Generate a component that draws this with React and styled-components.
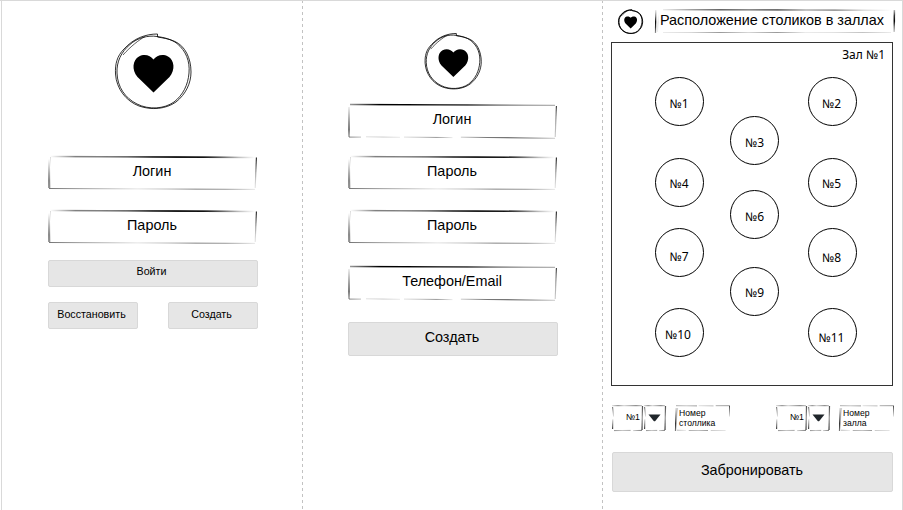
import React, { useId } from "react";
import styled, { createGlobalStyle } from "styled-components";

const GlobalStyle = createGlobalStyle`
  * { box-sizing: border-box; }
  body {
    margin: 0;
    background: #fff;
    color: #000;
    font-family: "Liberation Sans", Arial, sans-serif;
  }
`;

const Board = styled.main`
  display: grid;
  grid-template-columns: 301px 300px 1fr;
  width: 903px;
  height: 510px;
  padding-left: 1px;
  border-top: 1px solid #d9d9d9;
  border-right: 1px solid #d9d9d9;
  overflow: hidden;
`;

const Screen = styled.section`
  display: flex;
  flex-direction: column;
  align-items: ${(p) => p.$align || "center"};
  padding: ${(p) => p.$pad};
  border-left: 1px solid ${(p) => (p.$first ? "#d9d9d9" : "transparent")};
  ${(p) =>
    !p.$first &&
    `border-image: repeating-linear-gradient(to bottom, #c2c2c2 0 3px, transparent 3px 6px) 1;
     border-width: 0 0 0 1px;`}
`;

const Form = styled.form`
  display: flex;
  flex-direction: column;
  width: 210px;
  margin-top: ${(p) => p.$top}px;
`;

const FieldBox = styled.div`
  position: relative;
  display: flex;
  flex: none;
  align-items: ${(p) => (p.$multi ? "flex-start" : "center")};
  justify-content: ${(p) => p.$justify || "center"};
  width: ${(p) => p.$w}px;
  height: ${(p) => p.$h}px;
  margin-top: ${(p) => p.$mt || 0}px;
  padding: ${(p) => p.$pad || "0 0 5px 0"};
  font-size: ${(p) => p.$size || 14.4}px;
  line-height: ${(p) => (p.$multi ? "10px" : "18px")};
  white-space: nowrap;
`;

const FrameSvg = styled.svg`
  position: absolute;
  inset: 0;
  overflow: visible;
  pointer-events: none;
`;

const Button = styled.button`
  display: flex;
  align-items: center;
  justify-content: center;
  width: ${(p) => p.$w}px;
  height: ${(p) => p.$h}px;
  margin: ${(p) => p.$mt || 0}px 0 0;
  padding: ${(p) => p.$pad || "0 2px 3px 0"};
  border: 1px solid #d8d8d8;
  border-radius: 2px;
  background: #e6e6e6;
  color: #000;
  font-family: inherit;
  font-size: ${(p) => p.$size || 14.4}px;
  line-height: 18px;
`;

const ButtonRow = styled.div`
  display: flex;
  justify-content: space-between;
  margin-top: 15px;
`;

const LogoSvg = styled.svg`
  display: block;
  flex: none;
  width: ${(p) => p.$size}px;
  height: ${(p) => p.$size}px;
  overflow: visible;
`;

const Header = styled.header`
  display: flex;
  align-items: flex-start;
  gap: 12px;
  height: 33px;
  padding-left: 6px;
`;

const Hall = styled.div`
  position: relative;
  width: 282px;
  height: 344px;
  margin-left: -1px;
  border: 1px solid #333;
  font-family: "Noto Sans", sans-serif;
  font-size: 12px;
  line-height: 16px;
`;

const HallName = styled.div`
  padding: 4px 7px 0 0;
  text-align: right;
`;

const Table = styled.div`
  position: absolute;
  left: ${(p) => p.$x - 24.5}px;
  top: ${(p) => p.$y - 24.5}px;
  display: flex;
  align-items: center;
  justify-content: center;
  width: 49px;
  height: 49px;
  padding-top: ${(p) => p.$dy * 2}px;
  padding-right: ${(p) => p.$dx || 0}px;
  border: 1px solid #000;
  border-radius: 50%;
`;

const Pickers = styled.div`
  display: flex;
  justify-content: space-between;
  width: 282px;
  margin-top: 19px;
`;

const Picker = styled.div`
  display: flex;
`;

const PickerParts = styled.div`
  display: flex;
  gap: 1px;
  margin-right: 9px;
`;

const Arrow = styled.svg`
  display: block;
  flex: none;
  width: 13px;
  height: 8px;
`;

/* Each stroke: endpoints from the box size, a width, and opacity stops along its length. */
const frames = {
  soft: (w, h) => [
    [2, 0.5, w - 2, 1.5, 1.3, [0, 0.5, 0.5, 0.6, 0.9, 1, 0.9, 0.4, 0]],
    [w * 0.3, 0.5, w - 18, 1, 1, [0, 0.2, 0.6, 0.5, 0]],
    [1, 3, 1, h - 2, 1.3, [0, 0.25, 0.5, 0.7, 0.6]],
    [2.5, 1, 2.2, h - 2, 0.7, [0.2, 0, 0.1, 0.3]],
    [1, h - 1.5, w - 2, h - 0.6, 0.9, [0.6, 0.45, 0.3, 0.12, 0.3, 0.55, 0.45, 0.1]],
    [w - 0.6, 1.5, w - 1.8, h - 2, 1.1, [0.9, 0.7, 0.4, 0.2, 0.1]],
  ],
  bold: (w, h) => [
    [2, 0.5, w - 2, 1.4, 1.3, [0.4, 1, 1, 0.9, 0.9, 0.6, 0.4, 0.3]],
    [1, 3, 1, h - 1, 1.3, [0.1, 0.35, 0.6, 0.8, 0.4]],
    [1, h - 0.9, 13, h - 0.9, 1, [0.5, 0.25]],
    [18, h - 1.2, 52, h - 0.7, 0.8, [0.15, 0.25, 0.1]],
    [56, h - 0.9, w * 0.5, h - 0.4, 0.8, [0.15, 0.3, 0.5, 0.1]],
    [w * 0.54, h - 0.8, w - 2, h + 0.3, 1, [0.2, 0.5, 0.7, 0.5, 0.2]],
    [w - 0.6, 2, w - 1.8, h - 1, 1.1, [0.8, 0.5, 0.3, 0.2]],
  ],
  title: (w, h) => [
    [8, 0.7, w - 3, 1.2, 1.1, [0.1, 0.5, 0.8, 0.6, 0.8, 0.4, 0.6, 0.2, 0]],
    [0.8, 1, 0.5, h, 1.2, [0.1, 0.5, 1, 0.8, 0.4]],
    [3.5, 5, 2.5, h - 1, 0.7, [0, 0.2, 0.1]],
    [8, h - 0.5, w - 4, h - 0.5, 0.8, [0.1, 0.2, 0.5, 0.2, 0.5, 0.1, 0.15, 0.3, 0.1]],
    [w - 0.6, 1, w - 0.8, h - 1, 1.5, [0.3, 0.8, 1, 0.5, 0.2]],
  ],
  picker: (w, h) => [
    [0, 0.7, w - 1, 0.7, 0.9, [0.15, 0.55, 0.2, 0.4, 0.6, 0.3]],
    [0.6, 2, 1.6, h * 0.45, 1, [0.6, 0.1]],
    [0.8, h * 0.55, 0.6, h - 2, 1.1, [0.15, 0.8]],
    [2, h - 0.4, w * 0.6, h - 0.6, 0.9, [0.5, 0.25, 0.4]],
    [w * 0.68, h - 0.4, w - 1, h - 0.6, 0.9, [0.2, 0.6]],
    [w - 0.5, 1, w - 1, h - 1, 1.2, [0.7, 0.4, 0.8]],
  ],
  caption: (w, h) => [
    [1, 0.7, w * 0.4, 0.9, 0.8, [0.4, 0.3, 0.5]],
    [w * 0.43, 0.7, w * 0.7, 0.9, 0.8, [0.15, 0.35]],
    [w * 0.74, 0.7, w, 0.7, 0.8, [0.4, 0.5]],
    [1.2, 3, 0.5, h, 1.2, [0.2, 0.6, 0.9, 0.5]],
    [2.6, 3, 1.8, h * 0.6, 0.7, [0.3, 0]],
    [2, h - 0.8, w * 0.2, h - 0.5, 0.7, [0.4, 0.1]],
    [w * 0.25, h - 0.5, w * 0.6, h - 0.5, 0.8, [0.4, 0.3, 0.5]],
    [w * 0.65, h - 0.5, w * 0.92, h - 0.5, 0.7, [0.3, 0.15]],
    [w - 0.5, 1, w - 0.5, h * 0.45, 1, [0.7, 0.1]],
  ],
};

function SketchFrame({ w, h, kind }) {
  const id = useId().replace(/[^a-zA-Z0-9]/g, "");
  return (
    <FrameSvg width={w} height={h} viewBox={`0 0 ${w} ${h}`} aria-hidden="true">
      {frames[kind](w, h).map(([x1, y1, x2, y2, sw, stops], i) => (
        <g key={i}>
          <linearGradient id={`${id}s${i}`} gradientUnits="userSpaceOnUse" x1={x1} y1={y1} x2={x2} y2={y2}>
            {stops.map((o, k) => (
              <stop key={k} offset={k / (stops.length - 1)} stopColor="#000" stopOpacity={o} />
            ))}
          </linearGradient>
          <line x1={x1} y1={y1} x2={x2} y2={y2} stroke={`url(#${id}s${i})`} strokeWidth={sw} />
        </g>
      ))}
    </FrameSvg>
  );
}

function Field({ w = 209, h = 34, kind = "soft", children, ...rest }) {
  return (
    <FieldBox $w={w} $h={h} {...rest}>
      <SketchFrame w={w} h={h} kind={kind} />
      {children}
    </FieldBox>
  );
}

function Logo({ size, stroke = 0.8 }) {
  const pen = { fill: "none", stroke: "#000", strokeWidth: stroke, vectorEffect: "non-scaling-stroke" };
  return (
    <LogoSvg $size={size} viewBox="0 0 78 78" aria-hidden="true">
      <path
        {...pen}
        d="M43.5 5 L43.5 2 C32 2 20 6 10 17 C3 24 1 32 1.5 42 C2.5 57 12 69 25 74 C38 78.5 52 77 62 70 C72 62 77 51 77 40 C77 26 71 14 61 9.5 C54 6.5 49 6 43.5 5"
      />
      <path
        {...pen}
        d="M43 4.5 C34 3 23 6 16 12.5 C7 20 2.5 30 3 41 C3.5 55 11 66 23 72 C35 78 50 77 60 70 C69 63 74 53 75 41 C76 29 72 19 63 11.5 C57 7 50 5.5 43 4.5"
      />
      <path {...pen} strokeWidth={stroke * 0.8} d="M31 4.5 C25 8 17 14 9 23" />
      <path d="M39.5 60.5 L23.500 45 C17.5 38 18.5 28 25 24.5 C30.5 21.5 36.5 23.5 39.5 27.5 C42.5 23.5 48.5 21.5 54 24.5 C60.5 28 61.5 38 55.5 45 Z" />
    </LogoSvg>
  );
}

/* number, centre x, centre y, label offset down, label inset from the right */
const tables = [
  [1, 67, 58.5, 2.5, 0],
  [2, 220, 58.5, 2.5, 1],
  [3, 142.5, 97.5, 2.5, 0],
  [4, 67, 139, 2, 0],
  [5, 220, 139, 2, 1],
  [6, 142.5, 171.5, 2.5, 0],
  [7, 67, 209, 4.5, 0],
  [8, 220, 209, 5.5, 1],
  [9, 142.5, 248, 2, 0],
  [10, 67, 289.5, 2, 2],
  [11, 220, 289.5, 5, 1],
];

function NumberPicker({ caption }) {
  return (
    <Picker>
      <PickerParts>
        <Field w={31} h={26} kind="picker" $size={8.8} $justify="flex-end" $pad="0 3px 2px 0">
          №1
        </Field>
        <Field w={22} h={26} kind="picker" $pad="0 1px 0 0">
          <Arrow viewBox="0 0 13 8">
            <path d="M0.5 0.5 H12.5 L7.5 6.8 Q6.5 7.8 5.5 6.8 Z" fill="#20262b" />
          </Arrow>
        </Field>
      </PickerParts>
      <Field w={55} h={26} kind="caption" $multi $size={8.6} $justify="flex-start" $pad="3px 0 0 4px">
        <span>
          {caption[0]}
          <br />
          {caption[1]}
        </span>
      </Field>
    </Picker>
  );
}

export default function App() {
  return (
    <>
      <GlobalStyle />
      <Board>
        <Screen $first $pad="31px 0 0 1px">
          <Logo size={78} />
          <Form $top={46}>
            <Field>Логин</Field>
            <Field $mt={20}>Пароль</Field>
            <Button type="button" $w={210} $h={27} $mt={16} $size={10.7} $pad="0 2px 5px 0">Войти</Button>
            <ButtonRow>
              <Button type="button" $w={90} $h={27} $size={10.7}>Восстановить</Button>
              <Button type="button" $w={90} $h={27} $size={10.7}>Создать</Button>
            </ButtonRow>
          </Form>
        </Screen>

        <Screen $pad="31px 0 0">
          <Logo size={58} />
          <Form $top={14}>
            <Field kind="bold">Логин</Field>
            <Field $mt={18}>Пароль</Field>
            <Field $mt={20}>Пароль</Field>
            <Field kind="bold" $mt={22}>Телефон/Email</Field>
            <Button type="button" $w={210} $h={34} $mt={22} $pad="0 1px 4px 0">Создать</Button>
          </Form>
        </Screen>

        <Screen $align="flex-start" $pad="8px 0 0 9px">
          <Header>
            <Logo size={25} stroke={0.9} />
            <Field w={240} h={24} kind="title" $justify="flex-start" $pad="0 0 2px 5px">
              Расположение столиков в заллах
            </Field>
          </Header>
          <Hall>
            <HallName>Зал №1</HallName>
            {tables.map(([n, x, y, dy, dx]) => (
              <Table key={n} $x={x} $y={y} $dy={dy} $dx={dx}>№{n}</Table>
            ))}
          </Hall>
          <Pickers>
            <NumberPicker caption={["Номер", "столлика"]} />
            <NumberPicker caption={["Номер", "залла"]} />
          </Pickers>
          <Button type="button" $w={281} $h={40} $mt={21} $pad="0 1px 4px 0">Забронировать</Button>
        </Screen>
      </Board>
    </>
  );
}
